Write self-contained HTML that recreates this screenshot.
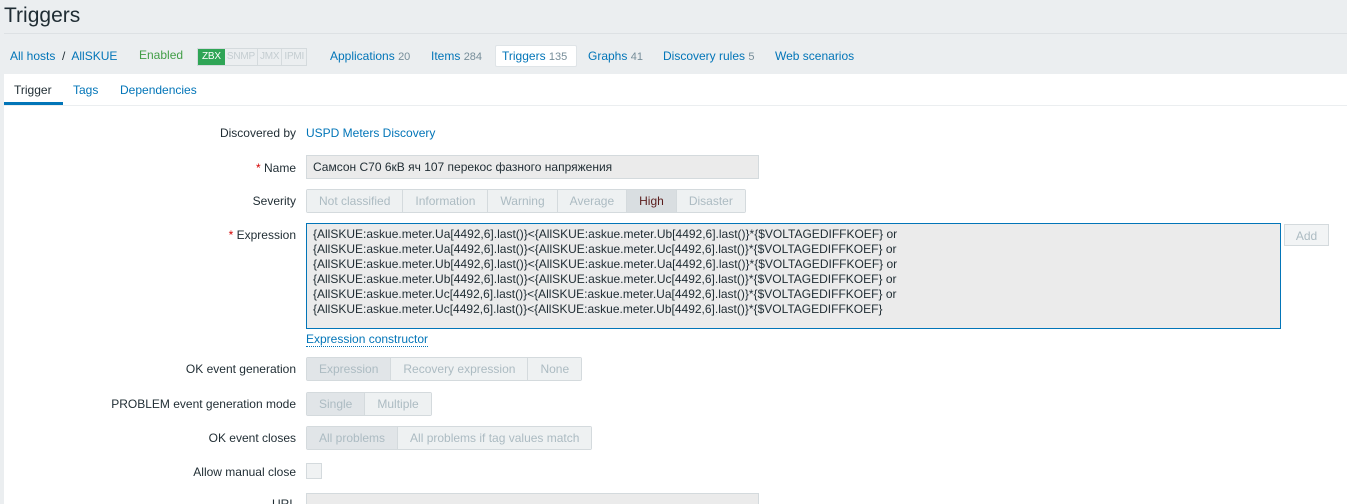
<!DOCTYPE html><html style="height:504px;overflow:hidden"><head><style>
body{margin:0;width:1347px;height:504px;overflow:hidden;background:#ebeef0;font-family:"Liberation Sans",Arial,sans-serif;font-size:12px;color:#1f2c33;position:relative}
.a{position:absolute}
a{color:#0275b8;text-decoration:none}
.g{color:#768d99}
.lbl{position:absolute;right:1051px;text-align:right;white-space:nowrap}
.req{color:#d40000}
.grp{position:absolute;display:flex;height:22px;border:1px solid #d4dadd;border-radius:2px;background:#f2f4f5}
.grp span{padding:0 12px;line-height:22px;color:#acbbc2;border-right:1px solid #d4dadd;background:#eef1f2}
.grp span:last-child{border-right:0}
.grp .sel{background:#d9dee1;color:#1f2c33}
.grp .dsel{background:#e1e5e8;color:#acbbc2}
.inp{position:absolute;background:#ebebeb;border:1px solid #d4dadd;box-sizing:border-box}
</style></head><body>
<div class="a" style="left:4px;top:4px;font-size:21px;color:#1f2c33">Triggers</div>
<div class="a" style="left:4px;top:33px;width:1343px;height:1px;background:#dde1e4"></div>
<div class="a" style="left:10px;top:49px;white-space:nowrap"><a>All hosts</a> &nbsp;/&nbsp; <a>AllSKUE</a></div>
<div class="a" style="left:139px;top:48px;color:#429e47">Enabled</div>
<div class="a" style="left:197px;top:48px;display:flex;height:16px;border:1px solid #d4dadd;font-size:10px;line-height:16px;letter-spacing:-0.2px">
<span style="background:#2fa556;color:#fff;padding:0 4px">ZBX</span><span style="color:#c4cdd1;padding:0 2px;border-right:1px solid #d4dadd">SNMP</span><span style="color:#c4cdd1;padding:0 2px;border-right:1px solid #d4dadd">JMX</span><span style="color:#c4cdd1;padding:0 2px">IPMI</span></div>
<div class="a" style="left:330px;top:49px;white-space:nowrap"><a>Applications</a> <span class="g" style="font-size:11px">20</span></div>
<div class="a" style="left:431px;top:49px;white-space:nowrap"><a>Items</a> <span class="g" style="font-size:11px">284</span></div>
<div class="a" style="left:495px;top:45px;width:80px;height:20px;background:#fff;border:1px solid #dfe4e7;border-radius:2px"></div>
<div class="a" style="left:502px;top:49px;white-space:nowrap"><a>Triggers</a> <span class="g" style="font-size:11px">135</span></div>
<div class="a" style="left:588px;top:49px;white-space:nowrap"><a>Graphs</a> <span class="g" style="font-size:11px">41</span></div>
<div class="a" style="left:663px;top:49px;white-space:nowrap"><a>Discovery rules</a> <span class="g" style="font-size:11px">5</span></div>
<div class="a" style="left:775px;top:49px"><a>Web scenarios</a></div>
<div class="a" style="left:4px;top:74px;width:1343px;height:430px;background:#fff"></div>
<div class="a" style="left:4px;top:105px;width:1343px;height:1px;background:#ebeef0"></div>
<div class="a" style="left:14px;top:83px">Trigger</div>
<div class="a" style="left:4px;top:102px;width:59px;height:3px;background:#0275b8"></div>
<div class="a" style="left:73px;top:83px"><a>Tags</a></div>
<div class="a" style="left:120px;top:83px"><a>Dependencies</a></div>

<div class="lbl" style="top:126px">Discovered by</div>
<div class="a" style="left:306px;top:126px"><a>USPD Meters Discovery</a></div>
<div class="lbl" style="top:161px"><span class="req">*</span> Name</div>
<div class="inp" style="left:306px;top:155px;width:453px;height:24px;padding:5px 6px;line-height:13px">Самсон С70 6кВ яч 107 перекос фазного напряжения</div>
<div class="lbl" style="top:194px">Severity</div>
<div class="grp" style="left:306px;top:189px"><span>Not classified</span><span>Information</span><span>Warning</span><span>Average</span><span class="sel" style="color:#5a1c1c">High</span><span>Disaster</span></div>
<div class="lbl" style="top:228px"><span class="req">*</span> Expression</div>
<div class="inp" style="left:306px;top:223px;width:975px;height:106px;border-color:#0275b8;padding:3px 6px;line-height:15px;white-space:pre">{AllSKUE:askue.meter.Ua[4492,6].last()}&lt;{AllSKUE:askue.meter.Ub[4492,6].last()}*{$VOLTAGEDIFFKOEF} or
{AllSKUE:askue.meter.Ua[4492,6].last()}&lt;{AllSKUE:askue.meter.Uc[4492,6].last()}*{$VOLTAGEDIFFKOEF} or
{AllSKUE:askue.meter.Ub[4492,6].last()}&lt;{AllSKUE:askue.meter.Ua[4492,6].last()}*{$VOLTAGEDIFFKOEF} or
{AllSKUE:askue.meter.Ub[4492,6].last()}&lt;{AllSKUE:askue.meter.Uc[4492,6].last()}*{$VOLTAGEDIFFKOEF} or
{AllSKUE:askue.meter.Uc[4492,6].last()}&lt;{AllSKUE:askue.meter.Ua[4492,6].last()}*{$VOLTAGEDIFFKOEF} or
{AllSKUE:askue.meter.Uc[4492,6].last()}&lt;{AllSKUE:askue.meter.Ub[4492,6].last()}*{$VOLTAGEDIFFKOEF}</div>
<div class="a" style="left:1284px;top:224px;width:45px;height:22px;border:1px solid #d4dadd;background:#f2f4f5;color:#acbbc2;text-align:center;line-height:22px;box-sizing:border-box">Add</div>
<div class="a" style="left:306px;top:332px;border-bottom:1px dotted #0275b8;line-height:14px"><a>Expression constructor</a></div>
<div class="lbl" style="top:362px">OK event generation</div>
<div class="grp" style="left:306px;top:357px"><span class="dsel">Expression</span><span>Recovery expression</span><span>None</span></div>
<div class="lbl" style="top:397px">PROBLEM event generation mode</div>
<div class="grp" style="left:306px;top:392px"><span class="dsel">Single</span><span>Multiple</span></div>
<div class="lbl" style="top:431px">OK event closes</div>
<div class="grp" style="left:306px;top:426px"><span class="dsel">All problems</span><span>All problems if tag values match</span></div>
<div class="lbl" style="top:465px">Allow manual close</div>
<div class="a" style="left:306px;top:463px;width:16px;height:16px;border:1px solid #d4dadd;background:#f0f2f3;box-sizing:border-box"></div>
<div class="lbl" style="top:497px">URL</div>
<div class="inp" style="left:306px;top:493px;width:453px;height:11px;border-bottom:0"></div>
</body></html>
